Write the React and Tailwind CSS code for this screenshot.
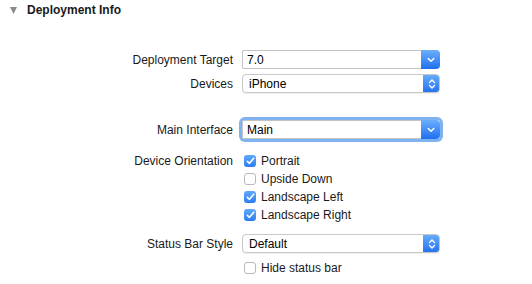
import React from 'react';

const Chevron = () => (
  <svg width="8" height="6" viewBox="0 0 8 6" fill="none">
    <path d="M1.2 1.5 L4 4.3 L6.8 1.5" stroke="white" strokeWidth="1.5" strokeLinecap="round" strokeLinejoin="round" />
  </svg>
);

const UpDown = () => (
  <svg width="8" height="12" viewBox="0 0 8 12" fill="none">
    <path d="M1.5 4.5 L4 2 L6.5 4.5" stroke="white" strokeWidth="1.4" strokeLinecap="round" strokeLinejoin="round" />
    <path d="M1.5 7.5 L4 10 L6.5 7.5" stroke="white" strokeWidth="1.4" strokeLinecap="round" strokeLinejoin="round" />
  </svg>
);

function Combo({ value, focused }) {
  return (
    <div className={`flex h-[19px] w-[198px] rounded-[3px] ${focused ? 'ring-[3px] ring-[#7fb2f0]' : ''}`}>
      <div className="flex-1 flex items-center pl-[4px] bg-white border border-[#c4c4c4] border-r-0 rounded-l-[2px] text-[12px] text-black">
        {value}
      </div>
      <div className="w-[19px] flex items-center justify-center rounded-r-[4px] bg-gradient-to-b from-[#6aaefb] to-[#1e6ff0]">
        <Chevron />
      </div>
    </div>
  );
}

function Popup({ value }) {
  return (
    <div className="flex h-[19px] w-[198px] rounded-[4px] border border-[#c8c8c8] bg-white shadow-[0_1px_0_rgba(0,0,0,0.06)] overflow-hidden">
      <div className="flex-1 flex items-center pl-[6px] text-[12px] text-black">{value}</div>
      <div className="w-[17px] -my-px -mr-px flex items-center justify-center bg-gradient-to-b from-[#6aaefb] to-[#1e6ff0]">
        <UpDown />
      </div>
    </div>
  );
}

function Check({ checked, label }) {
  return (
    <div className="flex items-center gap-[5px] h-[18px]">
      {checked ? (
        <div className="w-[12px] h-[12px] rounded-[3px] bg-gradient-to-b from-[#5fa8fa] to-[#2a7ef3] flex items-center justify-center">
          <svg width="9" height="8" viewBox="0 0 9 8" fill="none">
            <path d="M1.3 4.3 L3.5 6.3 L7.7 1.3" stroke="white" strokeWidth="1.6" strokeLinecap="round" strokeLinejoin="round" />
          </svg>
        </div>
      ) : (
        <div className="w-[12px] h-[12px] rounded-[3px] bg-white border border-[#b9b9b9]" />
      )}
      <span className="text-[12px] text-[#1a1a1a]">{label}</span>
    </div>
  );
}

function Row({ label, children, className = '' }) {
  return (
    <div className={`flex items-center ${className}`}>
      <div className="w-[233px] text-right text-[12px] text-[#1a1a1a]">{label}</div>
      <div className="pl-[9px]">{children}</div>
    </div>
  );
}

export default function App() {
  return (
    <div className="w-[532px] h-[284px] bg-white overflow-hidden" style={{ fontFamily: '"Liberation Sans", Arial, sans-serif' }}>
      <div className="flex items-center h-[20px] pl-[10px] gap-[10px]">
        <svg width="7" height="7" viewBox="0 0 7 7">
          <path d="M0 0 H7 L3.5 7 Z" fill="#8a8a8a" />
        </svg>
        <span className="text-[12px] font-bold text-[#1a1a1a]">Deployment Info</span>
      </div>

      <div className="flex flex-col">
        <Row label="Deployment Target" className="mt-[30px]">
          <Combo value="7.0" />
        </Row>
        <Row label="Devices" className="mt-[5px]">
          <Popup value="iPhone" />
        </Row>
        <Row label="Main Interface" className="mt-[27px]">
          <Combo value="Main" focused />
        </Row>
        <div className="flex mt-[13px]">
          <div className="w-[233px] text-right text-[12px] text-[#1a1a1a] h-[18px] leading-[18px]">Device Orientation</div>
          <div className="pl-[11px] flex flex-col">
            <Check checked label="Portrait" />
            <Check label="Upside Down" />
            <Check checked label="Landscape Left" />
            <Check checked label="Landscape Right" />
          </div>
        </div>
        <Row label="Status Bar Style" className="mt-[10px]">
          <Popup value="Default" />
        </Row>
        <div className="flex mt-[6px]">
          <div className="w-[233px]" />
          <div className="pl-[11px]">
            <Check label="Hide status bar" />
          </div>
        </div>
      </div>
    </div>
  );
}
